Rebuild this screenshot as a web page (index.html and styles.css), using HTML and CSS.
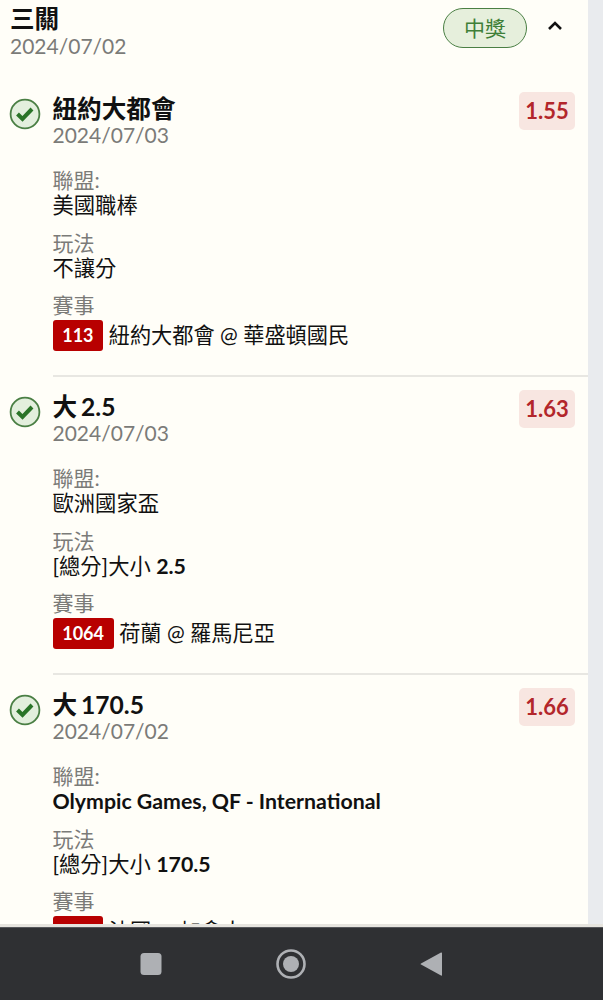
FILE: index.html
```html
<!DOCTYPE html>
<html lang="zh-Hant">
<head>
  <meta charset="UTF-8">
  <title>三關</title>
  <link rel="stylesheet" href="styles.css">
</head>
<body>
  <div class="screen">
    <div class="content">
      <main class="ticket">
        <header class="ticket-head">
          <div class="ticket-title">
            <h1>三關</h1>
            <div class="date">2024/07/02</div>
          </div>
          <span class="status">中獎</span>
          <svg class="chevron" width="16" height="10" viewBox="0 0 16 10"><path d="M2 8l6-6 6 6" fill="none" stroke="#111" stroke-width="2.6"/></svg>
        </header>

        <section class="bet">
          <svg class="check" width="32" height="32" viewBox="0 0 32 32"><circle cx="16" cy="16" r="14.4" fill="#e3efdd" stroke="#4a7f44" stroke-width="1.8"/><path d="M8.500 16l5 5 9.500-10" fill="none" stroke="#2a7428" stroke-width="4"/></svg>
          <div class="bet-body">
            <div class="bet-head">
              <div>
                <h2>紐約大都會</h2>
                <div class="date">2024/07/03</div>
              </div>
              <span class="odds">1.55</span>
            </div>
            <div class="label first">聯盟:</div>
            <div class="value">美國職棒</div>
            <div class="label">玩法</div>
            <div class="value">不讓分</div>
            <div class="label">賽事</div>
            <div class="match"><span class="code">113</span>紐約大都會 @ 華盛頓國民</div>
          </div>
        </section>

        <section class="bet">
          <svg class="check" width="32" height="32" viewBox="0 0 32 32"><circle cx="16" cy="16" r="14.4" fill="#e3efdd" stroke="#4a7f44" stroke-width="1.8"/><path d="M8.500 16l5 5 9.500-10" fill="none" stroke="#2a7428" stroke-width="4"/></svg>
          <div class="bet-body">
            <div class="bet-head">
              <div>
                <h2>大 2.5</h2>
                <div class="date">2024/07/03</div>
              </div>
              <span class="odds">1.63</span>
            </div>
            <div class="label first">聯盟:</div>
            <div class="value">歐洲國家盃</div>
            <div class="label">玩法</div>
            <div class="value">[總分]大小 <b>2.5</b></div>
            <div class="label">賽事</div>
            <div class="match"><span class="code">1064</span>荷蘭 @ 羅馬尼亞</div>
          </div>
        </section>

        <section class="bet">
          <svg class="check" width="32" height="32" viewBox="0 0 32 32"><circle cx="16" cy="16" r="14.4" fill="#e3efdd" stroke="#4a7f44" stroke-width="1.8"/><path d="M8.500 16l5 5 9.500-10" fill="none" stroke="#2a7428" stroke-width="4"/></svg>
          <div class="bet-body">
            <div class="bet-head">
              <div>
                <h2>大 170.5</h2>
                <div class="date">2024/07/02</div>
              </div>
              <span class="odds">1.66</span>
            </div>
            <div class="label first">聯盟:</div>
            <div class="value"><b>Olympic Games, QF - International</b></div>
            <div class="label">玩法</div>
            <div class="value">[總分]大小 <b>170.5</b></div>
            <div class="label">賽事</div>
            <div class="match"><span class="code">217</span>法國 @ 加拿大</div>
          </div>
        </section>
      </main>
      <div class="scrollbar"></div>
    </div>
    <nav class="navbar">
      <svg width="24" height="24" viewBox="0 0 24 24"><rect x="1.500" y="1" width="21" height="22" rx="3.500" fill="#aeb0b4"/></svg>
      <svg width="32" height="32" viewBox="0 0 32 32"><circle cx="16" cy="16" r="13.500" fill="none" stroke="#aeb0b4" stroke-width="2.600"/><circle cx="16" cy="16" r="8" fill="#aeb0b4"/></svg>
      <svg width="24" height="26" viewBox="0 0 24 26"><path d="M22 1.500c.6-.3 1 0 1 .6v22c0 .6-.4.9-1 .5L2 13.600c-.5-.3-.5-.9 0-1.200z" fill="#aeb0b4"/></svg>
    </nav>
  </div>
</body>
</html>
```

FILE: styles.css
```css
* {
  box-sizing: border-box;
}
body {
  margin: 0;
  font-family: Lato, "Noto Sans CJK TC", sans-serif;
  background: #fffef8;
  color: #111;
}
.screen {
  height: 1000px;
  overflow: hidden;
  display: flex;
  flex-direction: column;
}
.content {
  height: 927px;
  display: flex;
  overflow: hidden;
  border-bottom: 3px solid #e6e4de;
}
.scrollbar {
  width: 15px;
  background: #e9ebee;
}
.ticket {
  width: 588px;
  padding-top: 5px;
  overflow: hidden;
}
.ticket-head {
  display: flex;
  align-items: flex-start;
  padding: 0 25px 0 10px;
  height: 54px;
  margin-bottom: 19px;
}
.ticket-title {
  flex: 1;
}
h1, h2 {
  margin: 0;
  font-size: 24.600px;
  line-height: 28px;
  font-weight: 700;
  word-spacing: -2px;
}
h2 {
  line-height: 27px;
  padding-top: 3px;
}
.date {
  font-size: 21px;
  line-height: 25px;
  color: #7b7b78;
}
.status {
  width: 84px;
  height: 40px;
  border: 1.500px solid #4a7f44;
  border-radius: 20px;
  background: #e6efdc;
  color: #3f7f38;
  font-size: 21px;
  line-height: 37px;
  text-align: center;
  margin: 3px 20px 0 0;
}
.chevron {
  margin-top: 16px;
}
.bet {
  display: flex;
  padding-left: 9px;
  height: 298px;
  padding-top: 14px;
}
.check {
  flex: none;
  margin-top: 6px;
}
.bet-body {
  flex: 1;
  margin: 0 0 -1px 11.500px;
  padding-right: 13px;
  border-bottom: 2px solid #e8e7e2;
}
.bet:last-child .bet-body {
  border-bottom: 0;
}
.bet-head {
  display: flex;
  justify-content: space-between;
  align-items: flex-start;
}
.odds {
  width: 56px;
  height: 38px;
  border-radius: 5px;
  background: #f8e6e1;
  color: #b3262b;
  font-size: 22px;
  font-weight: 700;
  line-height: 38px;
  text-align: center;
}
.label {
  font-size: 21px;
  line-height: 26px;
  color: #7b7b78;
  margin-top: 11.500px;
}
.label.first {
  margin-top: 20px;
}
.value {
  font-size: 21.300px;
  line-height: 25px;
  color: #111;
}
.match {
  display: flex;
  align-items: center;
  font-size: 21.200px;
  line-height: 31px;
  margin-top: 2px;
}
.code {
  background: #b80000;
  color: #fff;
  font-size: 18px;
  font-weight: 700;
  border-radius: 3px;
  padding: 0 9.700px;
  margin-right: 5.500px;
  height: 31px;
}
.navbar {
  flex: 1;
  background: #2f3033;
  border-top: 1px solid #55565a;
  display: flex;
  align-items: center;
  justify-content: center;
  gap: 112px;
  padding-right: 22px;
}
```
